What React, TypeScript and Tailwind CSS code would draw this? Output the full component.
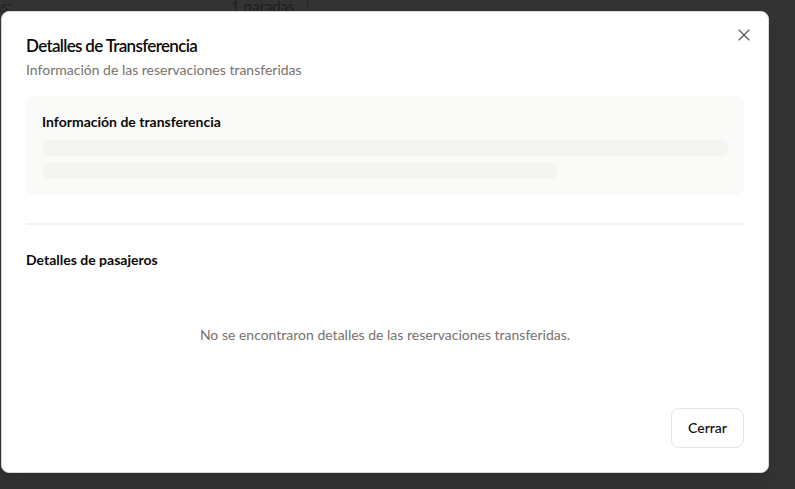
import { X } from "lucide-react";

const App = () => {
  return (
    <div
      className="relative w-[795px] h-[489px] overflow-hidden bg-[#333333]"
      style={{ fontFamily: "Lato, 'Noto Sans', sans-serif" }}
    >
      {/* page behind the overlay */}
      <div className="flex items-start h-[12px] text-[15px] leading-[12px] text-[#1e1e1e]">
        <span className="ml-[-6px] w-[237px]">as:</span>
        <span className="w-[76px]">1 paradas</span>
        <span className="h-[10px] w-px bg-[#262626]" />
      </div>

      <div className="absolute left-[1px] top-[11px] w-[768px] h-[462px] rounded-lg border border-[#d9d9d9] bg-white shadow-lg flex flex-col px-[24px] pt-[22px] pb-[24px]">
        <button className="absolute right-[14px] top-[13px] text-[#555]">
          <X size={20} strokeWidth={1.4} />
        </button>

        <h2 className="text-[17px] leading-6 font-semibold tracking-[-0.04em] text-[#0c0a09]">
          Detalles de Transferencia
        </h2>
        <p className="mt-[2px] text-sm leading-5 text-[#78716c]">Información de las reservaciones transferidas</p>

        <div className="mt-4 rounded-lg bg-[#fafaf9] px-4 pt-4 pb-4">
          <h3 className="text-sm leading-5 font-bold text-[#0c0a09]">Información de transferencia</h3>
          <div className="mt-2 h-4 w-full rounded-md bg-[#f4f4f3]" />
          <div className="mt-[7px] h-4 w-[515px] rounded-md bg-[#f4f4f3]" />
        </div>

        <div className="mt-[28px] h-[2px] bg-[#f2f2f1]" />

        <h3 className="mt-[25px] text-sm leading-5 font-bold text-[#0c0a09]">Detalles de pasajeros</h3>
        <p className="mt-[55px] text-center text-sm leading-5 text-[#78716c]">
          No se encontraron detalles de las reservaciones transferidas.
        </p>

        <div className="mt-auto flex justify-end">
          <button className="h-10 w-[73px] rounded-lg border border-[#e7e5e4] bg-white text-sm font-medium text-[#0c0a09]">
            Cerrar
          </button>
        </div>
      </div>
    </div>
  );
};

export default App;
